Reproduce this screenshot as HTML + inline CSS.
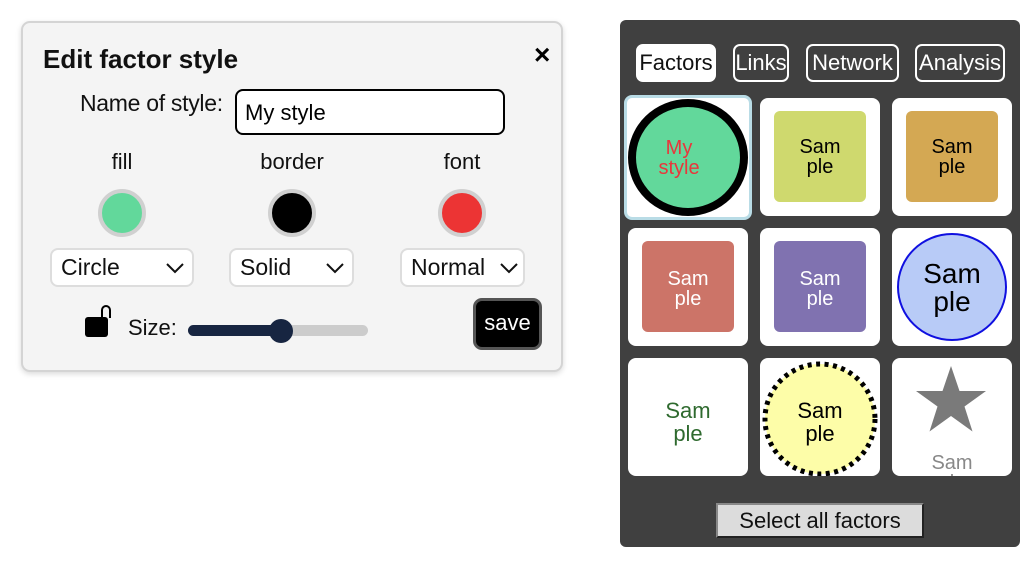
<!DOCTYPE html>
<html><head><style>
*{box-sizing:border-box;margin:0;padding:0}
body{width:1028px;height:562px;background:#fff;font-family:"Liberation Sans","DejaVu Sans",sans-serif;position:relative;overflow:hidden}
.a{position:absolute}
.dlg{left:21px;top:21px;width:542px;height:351px;background:#f4f4f4;border:2px solid #d4d4d4;border-radius:9px;box-shadow:0 2px 6px rgba(0,0,0,.15)}
.lbl{font-size:22px;color:#111;text-align:center;width:120px}
.dot{width:48px;height:48px;border-radius:50%;border:4px solid #d0d0d0}
.sel{height:39px;background:#fff;border:2px solid #ddd;border-radius:8px;font-size:23px;padding:4px 0 0 9px;color:#111}
.sel svg{position:absolute;right:8px;top:12px}
.panel{left:620px;top:20px;width:400px;height:527px;background:#404040;border-radius:6px}
.tab{height:38px;border:2px solid #fff;border-radius:7px;color:#fff;font-size:22px;text-align:center;line-height:33px}
.cell{width:120px;height:118px;background:#fff;border-radius:8px;overflow:hidden}
.t{font-size:20px;text-align:center;line-height:20px}
</style></head><body>
<div class="a dlg"></div>
<div class="a" style="left:43px;top:44px;font-size:26px;font-weight:bold;color:#111">Edit factor style</div>
<div class="a" style="left:534px;top:39px;font-size:28px;font-weight:bold">×</div>
<div class="a" style="left:80px;top:90px;font-size:23px;color:#111;letter-spacing:-0.3px">Name of style:</div>
<div class="a" style="left:235px;top:89px;width:270px;height:46px;background:#fff;border:2px solid #000;border-radius:8px;font-size:22px;padding:9px 0 0 8px">My style</div>
<div class="a lbl" style="left:62px;top:149px">fill</div>
<div class="a lbl" style="left:232px;top:149px">border</div>
<div class="a lbl" style="left:402px;top:149px">font</div>
<div class="a dot" style="left:98px;top:189px;background:#62d89b"></div>
<div class="a dot" style="left:268px;top:189px;background:#000"></div>
<div class="a dot" style="left:438px;top:189px;background:#ec3434"></div>
<div class="a sel" style="left:50px;top:248px;width:144px">Circle<svg width="18" height="12"><path d="M1 2l8 8 8-8" fill="none" stroke="#111" stroke-width="2"/></svg></div>
<div class="a sel" style="left:229px;top:248px;width:125px">Solid<svg width="18" height="12"><path d="M1 2l8 8 8-8" fill="none" stroke="#111" stroke-width="2"/></svg></div>
<div class="a sel" style="left:400px;top:248px;width:125px">Normal<svg width="18" height="12" style="right:5px"><path d="M1 2l8 8 8-8" fill="none" stroke="#111" stroke-width="2"/></svg></div>
<svg class="a" style="left:84px;top:303px" width="28" height="36"><path d="M18 17V7a4 4 0 0 1 8 0v8" fill="none" stroke="#000" stroke-width="2"/><rect x="1" y="14" width="23" height="20" rx="3" fill="#000"/></svg>
<div class="a" style="left:128px;top:315px;font-size:22px;color:#111">Size:</div>
<div class="a" style="left:188px;top:325px;width:180px;height:11px;background:#ccc;border-radius:6px"></div>
<div class="a" style="left:188px;top:325px;width:95px;height:11px;background:#172541;border-radius:6px"></div>
<div class="a" style="left:269px;top:319px;width:24px;height:24px;background:#172541;border-radius:50%"></div>
<div class="a" style="left:473px;top:298px;width:69px;height:52px;background:#000;border:3px solid #555;border-radius:9px;color:#fff;font-size:22px;text-align:center;line-height:44px">save</div>

<div class="a panel"></div>
<div class="a tab" style="left:636px;top:44px;width:80px;background:#fff;color:#111">Factors</div>
<div class="a tab" style="left:733px;top:44px;width:56px">Links</div>
<div class="a tab" style="left:806px;top:44px;width:93px">Network</div>
<div class="a tab" style="left:915px;top:44px;width:90px">Analysis</div>

<div class="a" style="left:624px;top:95px;width:128px;height:125px;background:#fff;border:3px solid #b9dce6;border-radius:8px"></div>
<div class="a" style="left:628px;top:99px;width:120px;height:117px;border-radius:50%;background:#62d89b;border:8px solid #000"></div>
<div class="a t" style="left:628px;top:138px;width:102px;color:#e8373c">My<br>style</div>

<div class="a cell" style="left:760px;top:98px"><div class="a" style="left:14px;top:13px;width:92px;height:91px;background:#cfd96e;border-radius:6px"></div><div class="a t" style="left:0;top:39px;width:120px">Sam<br>ple</div></div>
<div class="a cell" style="left:892px;top:98px"><div class="a" style="left:14px;top:13px;width:92px;height:91px;background:#d4a853;border-radius:6px"></div><div class="a t" style="left:0;top:39px;width:120px">Sam<br>ple</div></div>

<div class="a cell" style="left:628px;top:228px"><div class="a" style="left:14px;top:13px;width:92px;height:91px;background:#cc7468;border-radius:6px"></div><div class="a t" style="left:0;top:41px;width:120px;color:#fff">Sam<br>ple</div></div>
<div class="a cell" style="left:760px;top:228px"><div class="a" style="left:14px;top:13px;width:92px;height:91px;background:#8072b0;border-radius:6px"></div><div class="a t" style="left:0;top:41px;width:120px;color:#fff">Sam<br>ple</div></div>
<div class="a cell" style="left:892px;top:228px"><div class="a" style="left:5px;top:5px;width:110px;height:108px;border-radius:50%;background:#b8cbf7;border:2px solid #1010e0"></div><div class="a" style="left:0;top:32px;width:120px;text-align:center;font-size:28px;line-height:28px">Sam<br>ple</div></div>

<div class="a cell" style="left:628px;top:358px;height:118px"><div class="a t" style="left:0;top:41px;width:120px;color:#2f6a2f;font-size:22px;line-height:23px">Sam<br>ple</div></div>
<div class="a cell" style="left:760px;top:358px;height:118px"><svg class="a" style="left:0;top:0" width="120" height="118"><circle cx="60" cy="61" r="55" fill="#fdfda8" stroke="#000" stroke-width="5" stroke-dasharray="4 4.5"/></svg><div class="a t" style="left:0;top:41px;width:120px;font-size:22px;line-height:23px">Sam<br>ple</div></div>
<div class="a cell" style="left:892px;top:358px;height:118px"><svg class="a" style="left:22px;top:5px" width="74" height="70"><path d="M37 3l8.5 25h26.5l-21.5 15.5 8 25L37 53 15.5 68.5l8-25L2 28h26.5z" fill="#7a7a7a"/></svg><div class="a t" style="left:0;top:95px;width:120px;color:#888">Sam<br>ple</div></div>

<div class="a" style="left:716px;top:503px;width:208px;height:35px;background:#dcdcdc;border:2px solid #888;border-right-color:#222;border-bottom-color:#222;font-size:22px;text-align:center;line-height:31px;color:#111">Select all factors</div>
</body></html>
